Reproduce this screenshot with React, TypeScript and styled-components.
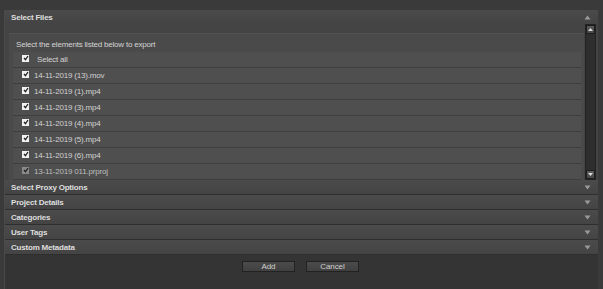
import React from "react";
import styled, { createGlobalStyle } from "styled-components";

const Global = createGlobalStyle`
  html, body { margin: 0; padding: 0; background: #353535; }
  * { box-sizing: border-box; }
`;

const Page = styled.div`
  width: 603px;
  height: 289px;
  background: #3a3a3a;
  padding: 10px 5px 0 4px;
  font-family: "Liberation Sans", Arial, sans-serif;
  overflow: hidden;
`;

const Panel = styled.div`
  height: 279px;
  border-left: 1px solid #4a4a4a;
  background: #343434;
  display: flex;
  flex-direction: column;
`;

const Header = styled.div<{ $open?: boolean }>`
  height: ${(p) => (p.$open ? 14 : 15)}px;
  flex: none;
  display: flex;
  align-items: center;
  justify-content: space-between;
  padding: 1px 6px 0 6px;
  background: linear-gradient(#4b4b4b, #444444);
  border-bottom: 1px solid ${(p) => (p.$open ? "#444" : "#2e2e2e")};
  color: #dedede;
  font-weight: bold;
  font-size: 8px;
  letter-spacing: -0.2px;
`;

const Arrow = styled.svg`
  width: 7px;
  height: 5px;
  margin-right: 1px;
`;

const Content = styled.div`
  height: 156px;
  flex: none;
  display: flex;
  background: #444;
`;

const ListArea = styled.div`
  flex: 1;
  padding: 9px 0 0 4px;
  display: flex;
`;

const ListBox = styled.div`
  flex: 1;
  background: #4a4a4a;
  border-top: 1px solid #525252;
  display: flex;
  flex-direction: column;
`;

const Intro = styled.div`
  height: 18px;
  flex: none;
  display: flex;
  align-items: center;
  padding: 2px 0 0 7px;
  color: #d4d4d4;
  font-size: 8px;
  letter-spacing: -0.2px;
`;

const Row = styled.div<{ $all?: boolean }>`
  height: 16px;
  flex: none;
  margin: 0 3px 0 4px;
  display: flex;
  align-items: center;
  padding-left: 9px;
  background: #4f4f4f;
  border-bottom: 1px solid #3e3e3e;
  color: #d2d2d2;
  font-size: 8px;
  letter-spacing: -0.2px;
  gap: ${(p) => (p.$all ? 8 : 5)}px;
`;

const Check = styled.span<{ $disabled?: boolean }>`
  width: 7px;
  height: 7px;
  flex: none;
  display: flex;
  align-items: center;
  justify-content: center;
  background: ${(p) => (p.$disabled ? "#8a8a8a" : "#f2f2f2")};
  margin-top: -3px;
`;

const RowLabel = styled.span<{ $disabled?: boolean }>`
  color: ${(p) => (p.$disabled ? "#bdbdbd" : "#d2d2d2")};
`;

const ScrollBar = styled.div`
  width: 11px;
  flex: none;
  margin: 0 2px 0 1px;
  display: flex;
  flex-direction: column;
  background: #2c2c2c;
  border: 1px solid #222;
`;

const ScrollBtn = styled.div`
  height: 9px;
  flex: none;
  background: linear-gradient(#5a5a5a, #474747);
  border: 1px solid #1e1e1e;
  display: flex;
  align-items: center;
  justify-content: center;
`;

const Track = styled.div`
  flex: 1;
  background: #2e2e2e;
`;

const Footer = styled.div`
  flex: 1;
  display: flex;
  justify-content: center;
  gap: 11px;
  padding-top: 6px;
  padding-right: 2px;
`;

const Button = styled.button`
  width: 53px;
  height: 11px;
  padding: 0;
  background: linear-gradient(#4b4b4b, #404040);
  border: 1px solid #222;
  color: #cfcfcf;
  font-family: "Liberation Sans", Arial, sans-serif;
  font-size: 8px;
  line-height: 9px;
  letter-spacing: -0.1px;
`;

const CheckMark = () => (
  <svg width="6" height="6" viewBox="0 0 6 6">
    <path d="M1 3 L2.5 4.6 L5 1" stroke="#222" strokeWidth="1.3" fill="none" />
  </svg>
);

const Up = ({ color = "#9a9a9a" }: { color?: string }) => (
  <Arrow viewBox="0 0 7 5">
    <path d="M0.5 4.5 L3.5 0.5 L6.5 4.5 Z" fill={color} />
  </Arrow>
);

const Down = () => (
  <Arrow viewBox="0 0 7 5">
    <path d="M0.5 0.5 L6.5 0.5 L3.5 4.5 Z" fill="#9a9a9a" />
  </Arrow>
);

const files = [
  "14-11-2019 (13).mov",
  "14-11-2019 (1).mp4",
  "14-11-2019 (3).mp4",
  "14-11-2019 (4).mp4",
  "14-11-2019 (5).mp4",
  "14-11-2019 (6).mp4",
];

const sections = ["Select Proxy Options", "Project Details", "Categories", "User Tags", "Custom Metadata"];

export default function App() {
  return (
    <>
      <Global />
      <Page>
        <Panel>
          <Header $open>
            <span>Select Files</span>
            <Up />
          </Header>
          <Content>
            <ListArea>
              <ListBox>
                <Intro>Select the elements listed below to export</Intro>
                <Row $all>
                  <Check><CheckMark /></Check>
                  <RowLabel>Select all</RowLabel>
                </Row>
                {files.map((f) => (
                  <Row key={f}>
                    <Check><CheckMark /></Check>
                    <RowLabel>{f}</RowLabel>
                  </Row>
                ))}
                <Row>
                  <Check $disabled><CheckMark /></Check>
                  <RowLabel $disabled>13-11-2019 011.prproj</RowLabel>
                </Row>
              </ListBox>
            </ListArea>
            <ScrollBar>
              <ScrollBtn>
                <svg width="5" height="3" viewBox="0 0 5 3"><path d="M0 3 L2.5 0 L5 3Z" fill="#ddd" /></svg>
              </ScrollBtn>
              <Track />
              <ScrollBtn>
                <svg width="5" height="3" viewBox="0 0 5 3"><path d="M0 0 L5 0 L2.5 3Z" fill="#ddd" /></svg>
              </ScrollBtn>
            </ScrollBar>
          </Content>
          {sections.map((s) => (
            <Header key={s}>
              <span>{s}</span>
              <Down />
            </Header>
          ))}
          <Footer>
            <Button>Add</Button>
            <Button>Cancel</Button>
          </Footer>
        </Panel>
      </Page>
    </>
  );
}
